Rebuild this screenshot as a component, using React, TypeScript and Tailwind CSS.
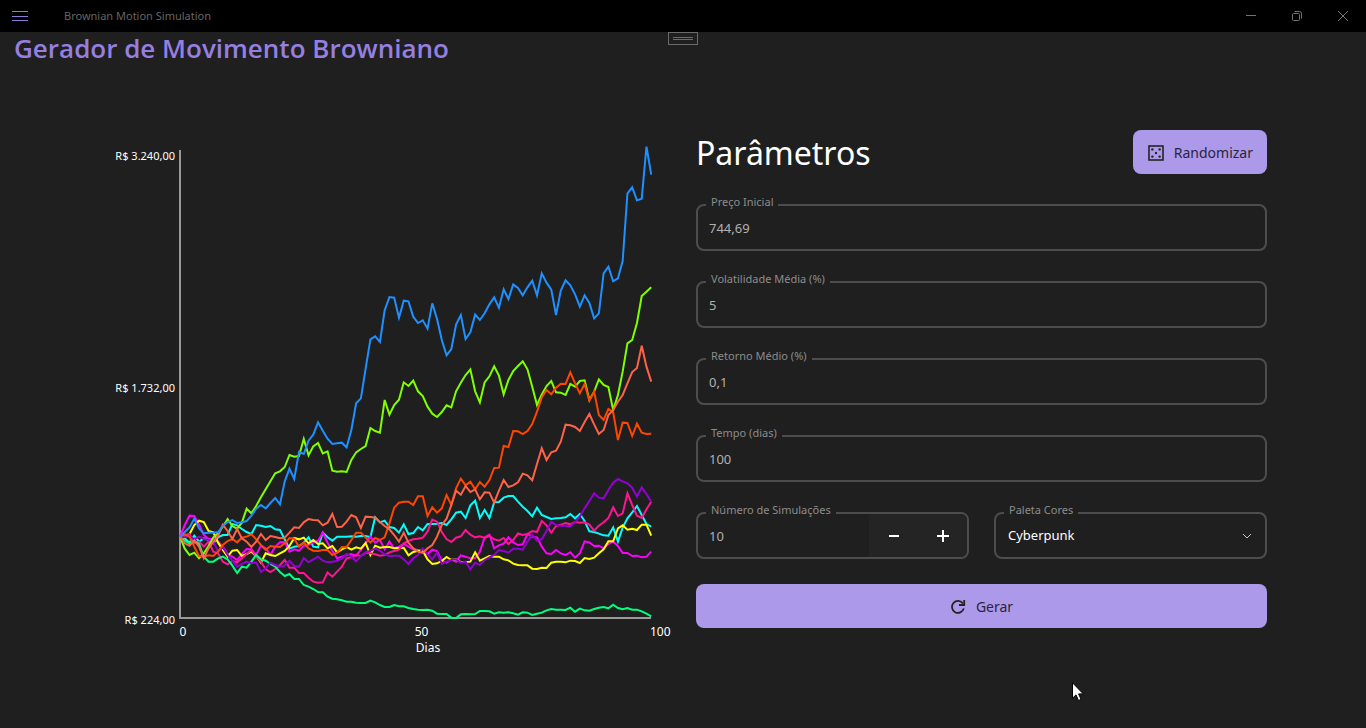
import { useState } from "react";
import type { ReactNode } from "react";

type Series = { name: string; color: string; values: number[] };

const STEP = 14.28;

const series: Series[] = [
  {
    name: "cyan",
    color: "#00ffff",
    values: [
      410, 415, 428, 407, 425, 415, 420, 430, 412, 405, 405, 372, 376, 387, 396, 402, 375, 377, 381, 378,
      388, 390, 418, 446, 440, 438, 428, 412, 440, 442, 398, 412, 422, 410, 410, 410, 409, 410, 408, 408,
      412, 352, 367, 362, 381, 384, 398, 373, 402, 399, 381, 391, 372, 372, 371, 369, 375, 358, 338, 335,
      354, 316, 302, 354, 330, 354, 307, 306, 293, 288, 288, 305, 320, 333, 349, 323, 345, 351, 357, 355,
      354, 352, 342, 355, 342, 363, 394, 396, 401, 406, 407, 382, 425, 383, 355, 337, 318, 345, 372, 380,
    ],
  },
  {
    name: "magenta",
    color: "#ff00ff",
    values: [
      410, 375, 347, 348, 373, 405, 417, 417, 425, 440, 462, 470, 480, 462, 447, 448, 465, 437, 445, 465,
      440, 427, 426, 455, 448, 452, 437, 434, 428, 422, 398, 428, 452, 475, 470, 466, 462, 467, 450, 430,
      410, 428, 420, 448, 425, 445, 440, 432, 440, 448, 450, 455, 462, 449, 453, 482, 488, 478, 485, 466,
      470, 475, 475, 455, 412, 404, 445, 436, 431, 412, 427, 435, 433, 402, 410, 412, 440, 460, 462, 450,
      460, 465, 457, 473, 460, 424, 427, 438, 437, 445, 432, 425, 438, 459, 459, 468, 467, 472, 470, 455,
    ],
  },
  {
    name: "yellow",
    color: "#ffff00",
    values: [
      410, 412, 402, 375, 362, 366, 393, 397, 428, 450, 470, 452, 450, 468, 462, 455, 468, 488, 460, 465,
      468, 460, 453, 438, 414, 418, 413, 430, 420, 432, 430, 445, 438, 457, 448, 441, 449, 442, 446, 429,
      465, 437, 443, 441, 441, 445, 444, 443, 466, 456, 452, 452, 478, 492, 490, 483, 471, 480, 478, 486,
      486, 485, 457, 482, 475, 468, 470, 470, 478, 481, 491, 495, 496, 496, 506, 507, 503, 504, 488, 485,
      485, 487, 482, 483, 489, 474, 477, 473, 460, 448, 424, 424, 385, 376, 389, 386, 390, 374, 374, 407,
    ],
  },
  {
    name: "deeppink",
    color: "#ff1493",
    values: [
      410, 405, 402, 430, 425, 440, 425, 455, 460, 485, 493, 483, 487, 475, 462, 450, 468, 485, 508, 516,
      507, 495, 480, 503, 503, 519, 519, 533, 545, 548, 547, 517, 530, 515, 500, 475, 472, 465, 468, 458,
      460, 463, 467, 465, 457, 453, 449, 430, 423, 418, 416, 413, 395, 359, 365, 396, 417, 426, 413, 409,
      390, 404, 412, 409, 414, 408, 418, 422, 414, 432, 420, 400, 405, 402, 393, 396, 363, 376, 398, 378,
      374, 369, 373, 366, 368, 367, 374, 392, 377, 367, 354, 322, 348, 340, 280, 315, 347, 354, 328, 305,
    ],
  },
  {
    name: "springgreen",
    color: "#00ff7f",
    values: [
      410, 422, 430, 423, 432, 470, 485, 485, 475, 470, 478, 497, 519, 500, 503, 485, 465, 478, 482, 492,
      500, 516, 528, 522, 537, 537, 555, 560, 567, 576, 577, 590, 596, 598, 601, 605, 605, 608, 609, 609,
      602, 607, 615, 621, 621, 615, 619, 619, 624, 627, 629, 630, 629, 632, 641, 642, 642, 653, 654, 643,
      642, 643, 642, 633, 633, 634, 641, 637, 638, 637, 640, 644, 637, 638, 645, 641, 638, 631, 627, 629,
      629, 630, 623, 635, 626, 631, 632, 627, 623, 621, 625, 614, 624, 628, 624, 629, 629, 634, 641, 649,
    ],
  },
  {
    name: "darkviolet",
    color: "#9400d3",
    values: [
      410, 412, 408, 418, 410, 417, 420, 425, 455, 442, 465, 482, 500, 492, 485, 490, 487, 516, 505, 488,
      495, 500, 497, 482, 498, 500, 474, 487, 478, 470, 482, 487, 485, 483, 475, 462, 470, 484, 468, 458,
      452, 446, 452, 463, 468, 467, 467, 478, 492, 475, 465, 446, 463, 478, 458, 492, 485, 480, 478, 488,
      485, 508, 488, 495, 480, 472, 465, 450, 453, 458, 446, 446, 449, 425, 405, 422, 418, 393, 365, 375,
      377, 377, 379, 367, 350, 325, 303, 280, 293, 295, 270, 248, 237, 244, 250, 263, 290, 262, 282, 305,
    ],
  },
  {
    name: "chartreuse",
    color: "#7fff00",
    values: [
      410, 446, 465, 458, 475, 460, 438, 412, 400, 380, 357, 378, 386, 368, 326, 340, 318, 292, 268, 244,
      220, 214, 201, 165, 170, 168, 117, 166, 139, 129, 160, 154, 212, 215, 214, 216, 180, 157, 147, 138,
      84, 93, 98, 0, 44, 15, -1, -53, -42, -58, -26, -12, 20, 41, 51, 36, 16, 22, -26, -52,
      -75, -92, -26, 7, -53, -71, -101, -73, -17, -60, -87, -102, -116, -92, -40, 15, -17, -42, -57, -23,
      -22, -15, -48, -40, -57, -59, 0, -25, -62, -45, -39, 30, -15, -85, -170, -180, -231, -312, -325, -338,
    ],
  },
  {
    name: "orangered",
    color: "#ff4500",
    values: [
      410, 403, 410, 440, 468, 470, 466, 468, 455, 435, 423, 417, 427, 413, 410, 403, 418, 435, 450, 438,
      440, 441, 430, 414, 416, 440, 427, 445, 452, 453, 450, 450, 465, 458, 441, 442, 420, 398, 398, 413,
      428, 414, 420, 412, 370, 323, 308, 305, 305, 315, 289, 289, 348, 322, 338, 325, 285, 315, 265, 236,
      256, 245, 268, 246, 260, 240, 204, 203, 138, 141, 93, 94, 102, 93, 72, 35, -8, -30, -17, -37,
      -49, -48, -83, -50, -20, -48, 2, -25, 45, 60, 27, 36, 120, 68, 69, 108, 71, 98, 102, 101,
    ],
  },
  {
    name: "tomato",
    color: "#ff6347",
    values: [
      410, 430, 437, 421, 440, 475, 445, 425, 408, 374, 393, 417, 387, 415, 425, 441, 425, 402, 420, 408,
      411, 415, 413, 398, 382, 384, 367, 357, 360, 361, 376, 368, 342, 381, 380, 365, 345, 352, 384, 350,
      351, 353, 366, 378, 388, 405, 425, 398, 428, 445, 455, 459, 445, 435, 410, 375, 356, 315, 272, 284,
      258, 276, 268, 298, 277, 278, 308, 272, 240, 261, 256, 247, 221, 226, 241, 192, 145, 180, 157, 152,
      125, 74, 76, 81, 93, 66, 42, 73, 102, 90, 45, 30, 5, -15, -50, -84, -96, -163, -100, -55,
    ],
  },
  {
    name: "dodgerblue",
    color: "#1e90ff",
    values: [
      410, 396, 382, 356, 385, 400, 398, 398, 396, 378, 366, 360, 369, 367, 363, 347, 326, 315, 325, 309,
      294, 313, 244, 206, 237, 156, 162, 122, 104, 67, 92, 116, 132, 130, 128, 142, 90, 10, -5, -94,
      -182, -191, -174, -269, -309, -307, -247, -298, -296, -250, -231, -239, -214, -290, -243, -180, -134,
      -153, -226, -255, -183, -203, -256, -240, -260, -287, -308, -277, -332, -303, -347, -336, -314, -338,
      -358, -314, -380, -352, -331, -255, -328, -359, -344, -317, -280, -314, -291, -245, -260, -380, -400,
      -356, -365, -417, -620, -638, -599, -604, -760, -676,
    ],
  },
];

const toPoints = (values: number[]) => values.map((v, i) => `${(i * STEP).toFixed(1)},${v}`).join(" ");

function TitleBar() {
  return (
    <header className="flex h-8 items-center bg-black text-[#737373]">
      <button type="button" aria-label="Menu" className="flex h-8 w-10 items-center justify-center">
        <svg className="h-4 w-4" viewBox="0 0 16 16" stroke="#8f78d8" fill="none" shapeRendering="crispEdges">
          <path d="M0 3.5h16M0 8.5h16M0 12.5h16" />
        </svg>
      </button>
      <span className="ml-6 flex-1 text-[11px] text-[#656565]">Brownian Motion Simulation</span>
      <button type="button" aria-label="Minimizar" className="flex h-8 w-[46px] items-center justify-center">
        <svg className="h-3 w-3" viewBox="0 0 12 12" stroke="currentColor" fill="none">
          <path d="M1 5.5h10" />
        </svg>
      </button>
      <button type="button" aria-label="Restaurar" className="flex h-8 w-[46px] items-center justify-center">
        <svg className="h-3 w-3" viewBox="0 0 12 12" stroke="currentColor" fill="none">
          <rect x="1.5" y="3.5" width="7" height="7" rx="1" />
          <path d="M3.5 1.5h5a2 2 0 0 1 2 2v5" />
        </svg>
      </button>
      <button type="button" aria-label="Fechar" className="flex h-8 w-[46px] items-center justify-center">
        <svg className="h-3 w-3" viewBox="0 0 12 12" stroke="currentColor" fill="none">
          <path d="M1 1l10 10M11 1L1 11" />
        </svg>
      </button>
    </header>
  );
}

function Chart() {
  return (
    <section aria-label="Simulações" className="mt-2.5 flex text-xs leading-4 text-white">
      <div className="mt-2 mr-[5px] flex h-[480px] w-[76px] flex-col justify-between text-right text-[11px] leading-4 whitespace-nowrap">
        <span>R$ 3.240,00</span>
        <span>R$ 1.732,00</span>
        <span>R$ 224,00</span>
      </div>
      <div className="min-w-0 flex-1">
        <div className="pr-5">
          <svg
            className="block h-[480px] w-full overflow-visible"
            viewBox="0 -780 1410 1440"
            preserveAspectRatio="none"
            fill="none"
            strokeWidth="2"
          >
            <path d="M0 -750V654H1413" stroke="#999999" vectorEffect="non-scaling-stroke" />
            {series.map((s) => (
              <polyline
                key={s.name}
                points={toPoints(s.values)}
                stroke={s.color}
                vectorEffect="non-scaling-stroke"
              />
            ))}
          </svg>
        </div>
        <div className="mt-1 -ml-[7px] flex justify-between text-center">
          <span className="w-5">0</span>
          <span className="w-5">50</span>
          <span className="w-5">100</span>
        </div>
        <p className="pl-1.5 text-center">Dias</p>
      </div>
    </section>
  );
}

function Field({ id, label, children }: { id: string; label: string; children: ReactNode }) {
  return (
    <div className="relative flex h-[47px] min-w-0 flex-1 rounded-lg border-2 border-[#4d4d4d]">
      <label
        htmlFor={id}
        className="absolute -top-3 left-2 bg-[#1f1f1f] px-[5px] text-[11px] leading-4 whitespace-nowrap text-[#8c8c8c]"
      >
        {label}
      </label>
      {children}
    </div>
  );
}

function TextField({ id, label, initial }: { id: string; label: string; initial: string }) {
  const [value, setValue] = useState(initial);
  return (
    <div className="flex">
      <Field id={id} label={label}>
        <input
          id={id}
          value={value}
          onChange={(e) => setValue(e.target.value)}
          className="w-full bg-transparent px-[11px] pt-0.5 text-[13px] text-[#b0b0b0] outline-none"
        />
      </Field>
    </div>
  );
}

function Parameters() {
  const [count, setCount] = useState(10);
  return (
    <form className="flex flex-col gap-[30px]" onSubmit={(e) => e.preventDefault()}>
      <div className="flex h-11 items-center justify-between">
        <h2 className="pt-0.5 text-[32px] text-white">Parâmetros</h2>
        <button
          type="button"
          className="flex h-11 items-center gap-2.5 rounded-lg bg-[#ac99ea] pt-0.5 pr-3.5 pl-[15px] text-sm text-[#2a2438]"
        >
          <svg className="h-4 w-4" viewBox="0 0 16 16" fill="none">
            <rect x="1" y="1" width="14" height="14" stroke="#242424" strokeWidth="1.6" />
            <g fill="#242424">
              <circle cx="4.4" cy="4.4" r="1.2" />
              <circle cx="11.6" cy="4.4" r="1.2" />
              <circle cx="8" cy="8" r="1.2" />
              <circle cx="4.4" cy="11.6" r="1.2" />
              <circle cx="11.6" cy="11.6" r="1.2" />
            </g>
          </svg>
          Randomizar
        </button>
      </div>
      <TextField id="preco" label="Preço Inicial" initial="744,69" />
      <TextField id="volatilidade" label="Volatilidade Média (%)" initial="5" />
      <TextField id="retorno" label="Retorno Médio (%)" initial="0,1" />
      <TextField id="tempo" label="Tempo (dias)" initial="100" />
      <div className="flex flex-col gap-[25px]">
        <div className="flex gap-[25px]">
          <Field id="simulacoes" label="Número de Simulações">
            <input
              id="simulacoes"
              value={count}
              onChange={(e) => setCount(Number(e.target.value) || 0)}
              className="min-w-0 flex-1 bg-transparent px-[11px] pt-0.5 text-[13px] text-[#b0b0b0] outline-none"
            />
            <div className="flex rounded-r-md bg-[#242424] text-white">
              <button
                type="button"
                aria-label="Diminuir"
                onClick={() => setCount(count - 1)}
                className="flex w-[49px] items-center justify-center"
              >
                <svg className="h-3 w-3" viewBox="0 0 12 12" stroke="currentColor" strokeWidth="2">
                  <path d="M1 6h10" />
                </svg>
              </button>
              <button
                type="button"
                aria-label="Aumentar"
                onClick={() => setCount(count + 1)}
                className="flex w-[49px] items-center justify-center"
              >
                <svg className="h-3 w-3" viewBox="0 0 12 12" stroke="currentColor" strokeWidth="2">
                  <path d="M0 6h12M6 0v12" />
                </svg>
              </button>
            </div>
          </Field>
          <Field id="paleta" label="Paleta Cores">
            <select
              id="paleta"
              defaultValue="Cyberpunk"
              className="w-full appearance-none bg-transparent px-3 text-[13px] text-white outline-none"
            >
              <option>Cyberpunk</option>
            </select>
            <svg
              className="pointer-events-none absolute top-4 right-3 h-3 w-3"
              viewBox="0 0 12 12"
              fill="none"
              stroke="#c8c8c8"
            >
              <path d="M2 4l4 4 4-4" />
            </svg>
          </Field>
        </div>
        <button
          type="submit"
          className="flex h-11 items-center justify-center gap-2.5 rounded-lg bg-[#ac99ea] pt-0.5 text-sm text-[#2a2438]"
        >
          <svg className="h-4 w-4" viewBox="0 0 16 16" fill="none" stroke="#242424" strokeWidth="1.8">
            <path d="M13.8 9.4A6 6 0 1 1 13 4.6" />
            <path d="M14.2 1v5H9" />
          </svg>
          Gerar
        </button>
      </div>
    </form>
  );
}

export default function App() {
  return (
    <div className="relative min-h-screen bg-[#1f1f1f] font-['Noto_Sans','Open_Sans',sans-serif]">
      <TitleBar />
      <div className="absolute top-8 left-1/2 flex h-[13px] w-[30px] -translate-x-1/2 flex-col items-center justify-center gap-px border border-[#6a6a6a]">
        <span className="h-px w-5 bg-[#6a6a6a]" />
        <span className="h-px w-5 bg-[#6a6a6a]" />
      </div>
      <h1 className="pl-3.5 font-['Open_Sans','Noto_Sans',sans-serif] text-[26px] leading-8 font-semibold text-[#967fe0]">
        Gerador de Movimento Browniano
      </h1>
      <main className="mt-[66px] grid grid-cols-2 gap-[26px] px-[99px]">
        <Chart />
        <Parameters />
      </main>
      <svg className="pointer-events-none absolute top-[682px] left-[1072px] h-5 w-3" viewBox="0 0 12 20">
        <path
          d="M0.5 0.8v15.4l3.5-3.3 2.5 5.6 2.6-1.1-2.5-5.5h4.7z"
          fill="#ffffff"
          stroke="#000000"
          strokeWidth="1"
        />
      </svg>
    </div>
  );
}
